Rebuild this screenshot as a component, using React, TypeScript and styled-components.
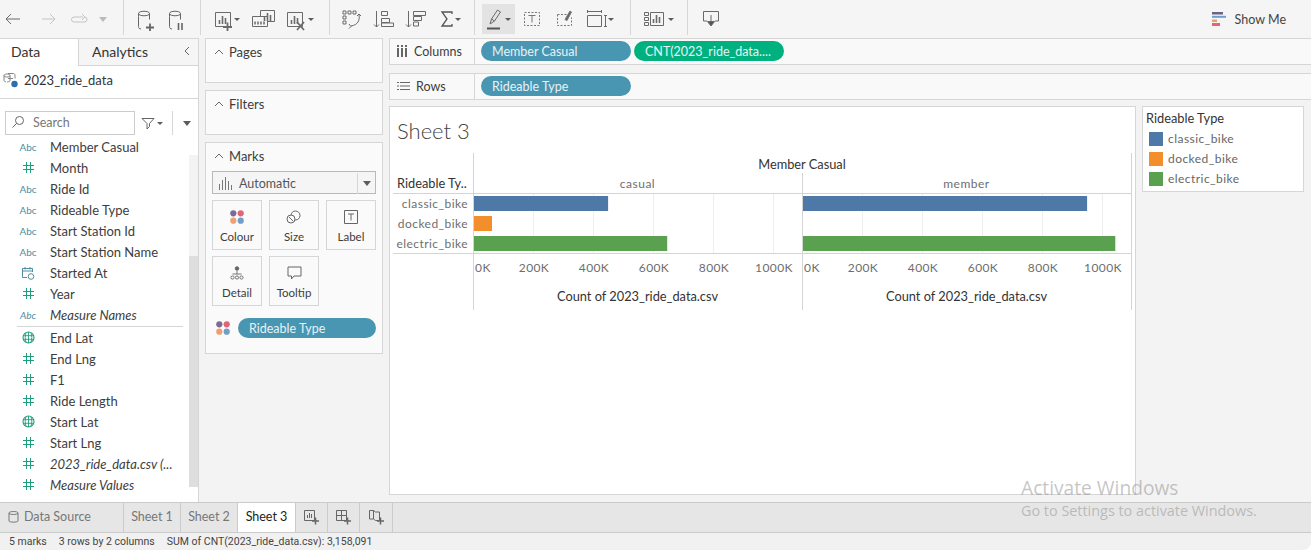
import React from 'react';
import styled, { createGlobalStyle } from 'styled-components';

const GlobalStyle = createGlobalStyle`
  html, body { margin: 0; padding: 0; background: #fff; }
  body { font-family: Lato, "Open Sans", sans-serif; color: #333; overflow: hidden; }
  * { box-sizing: border-box; }
`;

const Frame = styled.div`
  position: relative;
  width: 1311px;
  height: 550px;
  background: #f3f3f3;
  border-bottom-right-radius: 8px;
  display: flex;
  flex-direction: column;
  overflow: hidden;
`;

/* toolbar */
const Toolbar = styled.div`
  height: 38px;
  flex: none;
  display: flex;
  align-items: stretch;
  background: #f5f5f5;
`;
const ToolGroup = styled.div<{ $w: number; $pad?: number }>`
  width: ${p => p.$w}px;
  flex: none;
  display: flex;
  align-items: center;
  padding-left: ${p => p.$pad ?? 0}px;
  border-right: 1px solid #d6d6d6;
  margin-bottom: 3px;
`;
const Slot = styled.div<{ $w: number; $on?: boolean; $pad?: number; $gap?: number }>`
  width: ${p => p.$w}px;
  height: 30px;
  margin-top: 3px;
  flex: none;
  display: flex;
  align-items: center;
  justify-content: ${p => (p.$pad !== undefined ? 'flex-start' : 'center')};
  padding-left: ${p => p.$pad ?? 0}px;
  gap: ${p => p.$gap ?? 0}px;
  background: ${p => (p.$on ? '#e3e3e3' : 'transparent')};
  svg { flex: none; }
`;
const ShowMe = styled.div`
  margin-left: auto;
  margin-right: 25px;
  display: flex;
  align-items: center;
  gap: 9px;
  font-size: 12.5px;
  color: #444;
`;
const Caret = styled.span<{ $light?: boolean; $big?: boolean }>`
  display: inline-block;
  flex: none;
  width: 0;
  height: 0;
  border-left: ${p => (p.$big ? 4 : 3)}px solid transparent;
  border-right: ${p => (p.$big ? 4 : 3)}px solid transparent;
  border-top: ${p => (p.$big ? 5 : 3)}px solid ${p => (p.$light ? '#bbb' : '#5c5c5c')};
`;

const Ic = ({ w = 24, h = 24, c = '#6a6a6a', children }: { w?: number; h?: number; c?: string; children: React.ReactNode }) => (
  <svg width={w} height={h} viewBox={`0 0 ${w} ${h}`} fill="none" stroke={c} strokeWidth="1">
    {children}
  </svg>
);

const Cyl = () => <path d="M4.500 9.500v10c0 1.500 1 2.500 2.500 2.500M4.500 6.500c0-3 11-3 11 0v6M4.500 6.500c0 3 11 3 11 0M4.500 6.500v3" />;
const Bars = ({ x, y }: { x: number; y: number }) => (
  <path d={`M${x + 0.5} ${y + 4}v4M${x + 3.5} ${y}v8M${x + 6.5} ${y + 2}v6`} strokeWidth="1.6" />
);

/* main area */
const Main = styled.div`
  flex: 1;
  min-height: 0;
  display: flex;
`;
const DataPane = styled.div`
  width: 199px;
  flex: none;
  background: #fff;
  border-top: 1px solid #d6d6d6;
  border-right: 1px solid #d6d6d6;
  display: flex;
  flex-direction: column;
`;
const Tabs = styled.div`
  height: 27px;
  flex: none;
  display: flex;
`;
const Tab = styled.div<{ $on?: boolean }>`
  width: ${p => (p.$on ? 78 : 120)}px;
  display: flex;
  align-items: center;
  justify-content: space-between;
  padding: 0 7px 2px ${p => (p.$on ? 11 : 13)}px;
  font-size: 14px;
  color: #333;
  background: ${p => (p.$on ? '#fff' : '#f5f5f5')};
  border-left: ${p => (p.$on ? 'none' : '1px solid #d6d6d6')};
  border-bottom: ${p => (p.$on ? 'none' : '1px solid #d6d6d6')};
`;
const SourceRow = styled.div`
  height: 33px;
  flex: none;
  display: flex;
  align-items: center;
  gap: 5px;
  padding: 0 0 4px 3px;
  font-size: 13px;
  border-bottom: 1px solid #d6d6d6;
`;
const SearchRow = styled.div`
  height: 37px;
  flex: none;
  padding: 12px 0 0 5px;
  display: flex;
  align-items: flex-start;
`;
const SearchBox = styled.div`
  width: 130px;
  height: 24px;
  border: 1px solid #ccc;
  display: flex;
  align-items: center;
  gap: 8px;
  padding: 0 0 2px 5px;
  font-size: 12.5px;
  color: #777;
`;
const FilterBtn = styled.div`
  width: 32px;
  height: 24px;
  margin-left: 6px;
  display: flex;
  align-items: center;
  gap: 2px;
  border-right: 1px solid #d6d6d6;
`;
const MenuBtn = styled.div`
  height: 24px;
  display: flex;
  align-items: center;
  margin-left: 10px;
`;
const ListArea = styled.div`
  flex: 1;
  min-height: 0;
  display: flex;
`;
const FieldList = styled.div`
  width: 189px;
  flex: none;
`;
const Field = styled.div<{ $italic?: boolean }>`
  height: 21px;
  display: flex;
  align-items: center;
  font-size: 13px;
  font-style: ${p => (p.$italic ? 'italic' : 'normal')};
  color: #3d3d3d;
  white-space: nowrap;
`;
const FieldIcon = styled.span`
  width: 50px;
  padding-left: 17px;
  flex: none;
  display: flex;
  justify-content: center;
  padding-right: 11px;
`;
const AbcTag = styled.span`
  font-size: 10px;
  color: #4f8da3;
`;
const FieldRule = styled.div`
  height: 1px;
  margin: 1px 6px 0 17px;
  background: #d6d6d6;
`;
const Track = styled.div`
  width: 9px;
  margin: 19px 0 15px;
  background: #f3f3f3;
  display: flex;
  flex-direction: column;
  justify-content: flex-end;
`;
const Thumb = styled.div`
  height: 231px;
  background: #dedede;
`;

const Side = styled.div`
  width: 190px;
  flex: none;
  padding: 0 6px;
  display: flex;
  flex-direction: column;
  gap: 7px;
`;
const Card = styled.div<{ $h: number }>`
  height: ${p => p.$h}px;
  flex: none;
  background: #fafafa;
  border: 1px solid #d6d6d6;
`;
const CardHead = styled.div`
  height: 26px;
  display: flex;
  align-items: center;
  gap: 3px;
  padding-left: 6px;
  font-size: 13px;
  color: #3d3d3d;
`;
const MarkSelect = styled.div`
  margin: 2px 6px 0;
  height: 23px;
  border: 1px solid #b9b9b9;
  background: #f5f5f5;
  display: flex;
  align-items: center;
  gap: 7px;
  padding: 1px 0 0 5px;
  font-size: 12.5px;
  color: #555;
`;
const SelectArrow = styled.span`
  margin-left: auto;
  width: 18px;
  height: 21px;
  border-left: 1px solid #d6d6d6;
  display: flex;
  align-items: center;
  justify-content: center;
`;
const MarkGrid = styled.div`
  margin: 6px 6px 0;
  display: grid;
  grid-template-columns: repeat(3, 50px);
  grid-auto-rows: 50px;
  gap: 6px 7px;
`;
const MarkBtn = styled.div`
  border: 1px solid #d6d6d6;
  display: flex;
  flex-direction: column;
  align-items: center;
  padding-top: 9px;
  font-size: 11.5px;
  color: #3d3d3d;
  svg { margin-bottom: 6px; }
`;
const MarkPillRow = styled.div`
  margin: 12px 6px 0 10px;
  display: flex;
  align-items: center;
  gap: 8px;
`;
const Pill = styled.div<{ $green?: boolean; $w: number }>`
  width: ${p => p.$w}px;
  height: 20px;
  flex: none;
  border-radius: 10px;
  background: ${p => (p.$green ? '#00b180' : '#4996b2')};
  color: #e6f2f6;
  font-size: 12.5px;
  line-height: 22px;
  padding-left: 11px;
  white-space: nowrap;
`;

const Work = styled.div`
  flex: 1;
  min-width: 0;
  display: flex;
  flex-direction: column;
`;
const Shelf = styled.div`
  height: 27px;
  flex: none;
  display: flex;
  background: #f9f9f9;
  border: 1px solid #d6d6d6;
  border-right: none;
  margin-bottom: 8px;
`;
const ShelfLabel = styled.div`
  width: 85px;
  flex: none;
  border-right: 1px solid #d6d6d6;
  display: flex;
  align-items: center;
  gap: 6px;
  padding: 0 0 1px 7px;
  font-size: 12.5px;
  color: #3d3d3d;
`;
const ShelfPills = styled.div`
  display: flex;
  align-items: center;
  gap: 3px;
  padding: 0 0 1px 6px;
`;
const Canvas = styled.div`
  flex: 1;
  min-height: 0;
  display: flex;
  gap: 6px;
  margin-top: -2px;
  padding-bottom: 7px;
`;
const Sheet = styled.div`
  width: 747px;
  flex: none;
  background: #fff;
  border: 1px solid #d6d6d6;
`;
const SheetTitle = styled.div`
  height: 43px;
  padding: 10px 0 0 7px;
  font-size: 22px;
  font-weight: 300;
  line-height: 27px;
  color: #444;
`;
const Legend = styled.div`
  width: 162px;
  height: 86px;
  flex: none;
  background: #fff;
  border: 1px solid #d6d6d6;
  padding: 2px 0 0 3px;
`;
const LegendTitle = styled.div`
  font-size: 12.8px;
  line-height: 18px;
  color: #333;
  margin-bottom: 5px;
`;
const LegendRow = styled.div`
  height: 20px;
  display: flex;
  align-items: flex-start;
  gap: 5px;
  padding-left: 3px;
  font-size: 12px;
  line-height: 13px;
  letter-spacing: 0.45px;
  color: #666;
`;
const Swatch = styled.span<{ $c: string }>`
  width: 14px;
  height: 14px;
  background: ${p => p.$c};
`;

/* sheet tabs + status */
const SheetTabs = styled.div`
  height: 31px;
  flex: none;
  display: flex;
  background: #e6e6e6;
  border-top: 1px solid #cbcbcb;
  border-bottom: 1px solid #cbcbcb;
`;
const SheetTab = styled.div<{ $w: number; $on?: boolean }>`
  width: ${p => p.$w}px;
  flex: none;
  display: flex;
  align-items: center;
  justify-content: center;
  gap: 5px;
  padding-bottom: 2px;
  font-size: 12.5px;
  color: ${p => (p.$on ? '#222' : '#777')};
  background: ${p => (p.$on ? '#fff' : 'transparent')};
  border-right: 1px solid #cbcbcb;
`;
const SourceTab = styled(SheetTab)`
  justify-content: flex-start;
  padding-left: 8px;
`;
const Status = styled.div`
  height: 17px;
  flex: none;
  display: flex;
  align-items: center;
  gap: 12px;
  padding-left: 9px;
  font-family: Roboto, "Liberation Sans", sans-serif;
  font-size: 10.5px;
  color: #444;
  background: #f1f1f1;
  border-bottom-right-radius: 8px;
`;
const Watermark = styled.div`
  position: absolute;
  left: 1021px;
  top: 475px;
  font-family: "Open Sans", sans-serif;
  color: rgba(140, 140, 140, 0.5);
  pointer-events: none;
`;
const WatermarkBig = styled.div`
  font-size: 19.2px;
  line-height: 26px;
`;
const WatermarkSmall = styled.div`
  font-size: 14.4px;
  line-height: 20px;
`;

const ChartSvg = styled.svg`
  display: block;
  text {
    font-family: Lato, sans-serif;
    font-size: 12px;
  }
  .dark {
    font-size: 12.8px;
    fill: #333;
  }
`;

const BLUE = '#4e79a7';
const ORANGE = '#f28e2b';
const GREEN = '#59a14f';

const Hash = () => (
  <svg width="13" height="13" viewBox="0 0 13 13" fill="none" stroke="#1f9e7e" strokeWidth="1">
    <path d="M4.500 1v11M8.500 1v11M1 4.500h11M1 8.500h11" />
  </svg>
);
const Globe = () => (
  <svg width="13" height="13" viewBox="0 0 13 13" fill="none" stroke="#1f9e7e" strokeWidth="1.100">
    <circle cx="6.500" cy="6.500" r="5.500" />
    <path d="M1 4.700h11M1 8.300h11M6.500 1v11M4 1.800c-1 3-1 6.400 0 9.400M9 1.800c1 3 1 6.400 0 9.400" strokeWidth=".9" />
  </svg>
);
const Calendar = () => (
  <svg width="14" height="14" viewBox="0 0 14 14" fill="none" stroke="#4f8da3" strokeWidth="1">
    <path d="M6 11.500H1.500v-9h10V6M1.500 5h10M4 1v2.500M9 1v2.500" />
    <circle cx="10" cy="10.500" r="2.800" />
  </svg>
);
const Dots = () => (
  <svg width="14" height="14" viewBox="0 0 14 14">
    <circle cx="3.300" cy="3.300" r="3.100" fill="#7b6a94" />
    <circle cx="10.700" cy="3.300" r="3.100" fill="#e0657a" />
    <circle cx="3.300" cy="10.700" r="3.100" fill="#eba26f" />
    <circle cx="10.700" cy="10.700" r="3.100" fill="#6f9fc8" />
  </svg>
);
const Chevron = () => (
  <svg width="14" height="10" viewBox="0 0 14 10" fill="none" stroke="#666" strokeWidth="1">
    <path d="M3 7l4-4 4 4" />
  </svg>
);

type Kind = 'abc' | 'hash' | 'globe' | 'cal';
const dims: [string, Kind, boolean?][] = [
  ['Member Casual', 'abc'],
  ['Month', 'hash'],
  ['Ride Id', 'abc'],
  ['Rideable Type', 'abc'],
  ['Start Station Id', 'abc'],
  ['Start Station Name', 'abc'],
  ['Started At', 'cal'],
  ['Year', 'hash'],
  ['Measure Names', 'abc', true],
];
const measures: [string, Kind, boolean?][] = [
  ['End Lat', 'globe'],
  ['End Lng', 'hash'],
  ['F1', 'hash'],
  ['Ride Length', 'hash'],
  ['Start Lat', 'globe'],
  ['Start Lng', 'hash'],
  ['2023_ride_data.csv (...', 'hash', true],
  ['Measure Values', 'hash', true],
];

const FieldRow = ({ f }: { f: [string, Kind, boolean?] }) => (
  <Field $italic={f[2]}>
    <FieldIcon>
      {f[1] === 'abc' && <AbcTag>Abc</AbcTag>}
      {f[1] === 'hash' && <Hash />}
      {f[1] === 'globe' && <Globe />}
      {f[1] === 'cal' && <Calendar />}
    </FieldIcon>
    {f[0]}
  </Field>
);

const PANEL_W = 329;
const X_PER_K = 0.3;
const panels = [
  { name: 'casual', x: 84, values: [447, 60, 644] },
  { name: 'member', x: 413, values: [947, 0, 1041] },
];
const rows = [
  { name: 'classic_bike', c: BLUE },
  { name: 'docked_bike', c: ORANGE },
  { name: 'electric_bike', c: GREEN },
];
const ticks = [0, 200, 400, 600, 800, 1000];
const LINE = '#d4d4d4';
const GREY = '#6e6e6e';

const Chart = () => (
  <ChartSvg width={745} height={170} viewBox="0 0 745 170">
    {panels.map(p => (
      <g key={p.name}>
        {ticks.slice(1).map(t => (
          <line key={t} x1={p.x + t * X_PER_K - 0.5} x2={p.x + t * X_PER_K - 0.5} y1={44} y2={103} stroke="#eeeeee" />
        ))}
        {rows.map((r, i) =>
          p.values[i] ? (
            <rect key={r.name} x={p.x} y={46 + i * 20} width={p.values[i] * X_PER_K} height={15} fill={r.c} />
          ) : null
        )}
        {ticks.map(t => (
          <text
            key={t}
            x={t === 0 ? p.x + 1 : p.x + t * X_PER_K}
            y={122}
            textAnchor={t === 0 ? 'start' : 'middle'}
            fill={GREY}
            letterSpacing=".4"
          >
            {t}K
          </text>
        ))}
        <text x={p.x + PANEL_W / 2 - 1} y={38} textAnchor="middle" fill={GREY} letterSpacing=".5">{p.name}</text>
        <text x={p.x + PANEL_W / 2 - 1} y={151} textAnchor="middle" className="dark">Count of 2023_ride_data.csv</text>
      </g>
    ))}
    <path d="M83.500 3V160M412.500 23V160M741.500 3V160" stroke={LINE} />
    <path d="M3 43.500H741.500M3 103.500H741.500" stroke={LINE} />
    <text x={412} y={19} textAnchor="middle" className="dark">Member Casual</text>
    <text x={7} y={38} className="dark">Rideable Ty..</text>
    {rows.map((r, i) => (
      <text key={r.name} x={78} y={58 + i * 20} textAnchor="end" fill={GREY} letterSpacing=".45">{r.name}</text>
    ))}
  </ChartSvg>
);

const App = () => (
  <Frame>
    <GlobalStyle />
    <Toolbar>
      <ToolGroup $w={124}>
        <Slot $w={29}><Ic><path d="M3 12h14M8 7l-5 5 5 5" /></Ic></Slot>
        <Slot $w={37}><Ic c="#c4c4c4"><path d="M6 12h13M14 7l5 5-5 5" /></Ic></Slot>
        <Slot $w={26}><Ic c="#c4c4c4"><path d="M16 10H7a2.500 2.500 0 000 5h10a2.500 2.500 0 001-5M15 7l3 3-3 3" /></Ic></Slot>
        <Slot $w={22}><Caret $light $big /></Slot>
      </ToolGroup>
      <ToolGroup $w={77}>
        <Slot $w={44}><Ic c="#666"><Cyl /><path d="M12 20.500h8M16 16.500v8" strokeWidth="1.800" /></Ic></Slot>
        <Slot $w={18}><Ic c="#666"><Cyl /><path d="M13.500 16v7M17 16v7" strokeWidth="1.600" /></Ic></Slot>
      </ToolGroup>
      <ToolGroup $w={129}>
        <Slot $w={42} $pad={10.5}>
          <Ic w={22}><path d="M3.500 5.500h15v14h-15z" /><Bars x={7} y={9} /><path d="M11 20h9M15.500 15.500v9" strokeWidth="1.800" /></Ic>
          <Caret />
        </Slot>
        <Slot $w={40}>
          <Ic><path d="M9.500 9V3.500h14v11H17M1.500 9.500h15v10h-15z" /><Bars x={13} y={6} /><path d="M4 14.500v3M7 14.500v3M10 14.500v3M13 14.500v3" strokeWidth="1.500" /></Ic>
        </Slot>
        <Slot $w={46} $pad={0.5}>
          <Ic><path d="M3.500 5.500h15v14h-15z" /><Bars x={7} y={9} /><path d="M13 15l7 8M20 15l-7 8" strokeWidth="1.800" /></Ic>
          <Caret />
        </Slot>
      </ToolGroup>
      <ToolGroup $w={145}>
        <Slot $w={42}><Ic><path d="M4 4h3v3H4zM9 4h3v3H9zM14 4h3v3h-3zM4 9h3v3H4zM4 14h3v3H4z" /><path d="M20 8c1 5-1 10-8 11M10 17l2 2.500-2 2M18 9l2-2 2 2" /></Ic></Slot>
        <Slot $w={22}><Ic><path d="M5.500 4v16M3 17.500l2.500 2.500 2.500-2.500M10.500 4.500h6v4h-6zM10.500 11.500h8v4h-8zM10.500 16h12v3.500h-12z" /></Ic></Slot>
        <Slot $w={42}><Ic><path d="M5.500 4v16M3 17.500l2.500 2.500 2.500-2.500M10.500 4.500h12v4h-12zM10.500 9.500h8v4h-8zM10.500 15h5v4h-5z" /></Ic></Slot>
        <Slot $w={28} $gap={1}>
          <Ic w={14} h={20} c="#555"><path d="M12 5V3H2l5 7-5 7h10v-2" strokeWidth="1.300" /></Ic>
          <Caret />
        </Slot>
      </ToolGroup>
      <ToolGroup $w={156} $pad={7}>
        <Slot $w={33} $on $gap={1}>
          <Ic w={18} h={24}>
            <path d="M4 17l1.500-5 6-9 3 2-6 9-4.500 3zM5.500 12l3 2" />
            <path d="M1 21.500h13" stroke="#555" strokeWidth="2" />
          </Ic>
          <Caret />
        </Slot>
        <Slot $w={33}>
          <Ic w={20} h={20} c="#777"><path d="M2.500 3.500h15v13h-15z" strokeDasharray="2 1.500" /><path d="M6.500 6.500h7M10 6.500v7" /></Ic>
        </Slot>
        <Slot $w={33}>
          <Ic w={20} h={20} c="#777"><path d="M2.500 5.500h12M2.500 5.500v11h14v-8" strokeDasharray="2 1.500" /><path d="M15 2l-5 8.500 2 1 4.500-8.500z" fill="#666" /></Ic>
        </Slot>
        <Slot $w={36} $gap={0}>
          <Ic w={24} h={20}><path d="M3.500 2.500h14M3.500 1v3M17.500 1v3M3.500 6.500h14v11h-14zM20 6.500h3M20 17.500h3M21.500 6.500v11" /></Ic>
          <Caret />
        </Slot>
      </ToolGroup>
      <ToolGroup $w={57}>
        <Slot $w={54} $pad={12} $gap={3}>
          <Ic w={22} h={20}><path d="M1.500 3.500h4v3h-4zM1.500 8.500h4v3h-4zM1.500 13.500h4v3h-4zM7.500 3.500h13v13h-13z" /><Bars x={10} y={6} /></Ic>
          <Caret />
        </Slot>
      </ToolGroup>
      <Slot $w={46}>
        <Ic w={18} h={22}><path d="M5 14H1.500V4.500h15V14H13M9 8v9" /><path d="M5.500 14.500h7L9 19z" fill="#555" /></Ic>
      </Slot>
      <ShowMe>
        <svg width="14" height="14" viewBox="0 0 14 14">
          <rect x="0" y="0" width="11" height="2.500" fill="#6b6488" />
          <rect x="0" y="3.800" width="14" height="2" fill="#6f9fc8" />
          <rect x="0" y="7.500" width="5" height="2.500" fill="#eba26f" />
          <rect x="0" y="11" width="8" height="3" fill="#e0657a" />
        </svg>
        Show Me
      </ShowMe>
    </Toolbar>

    <Main>
      <DataPane>
        <Tabs>
          <Tab $on>Data</Tab>
          <Tab>
            Analytics
            <svg width="8" height="12" viewBox="0 0 8 12" fill="none" stroke="#666"><path d="M6 2L2 6l4 4" /></svg>
          </Tab>
        </Tabs>
        <SourceRow>
          <svg width="16" height="16" viewBox="0 0 16 16" fill="none" stroke="#777" strokeWidth=".9">
            <path d="M1 3.500c0-2 6-2 6 0v5c0 1-2 1.500-3 1.500M1 3.500v5c0 .8 1 1.200 2 1.400M1 3.500c0 2 6 2 6 0" />
            <path d="M5 1.500h5c1 0 2 .5 2 2v3M5 6.500h5" />
            <circle cx="11.500" cy="12" r="3.200" fill="#2e6fb0" stroke="none" />
          </svg>
          2023_ride_data
        </SourceRow>
        <SearchRow>
          <SearchBox>
            <svg width="14" height="14" viewBox="0 0 14 14" fill="none" stroke="#666"><circle cx="8.500" cy="5.500" r="4" /><path d="M5.500 8.500L1.500 12.500" /></svg>
            Search
          </SearchBox>
          <FilterBtn>
            <svg width="14" height="13" viewBox="0 0 14 13" fill="none" stroke="#666"><path d="M1 1.500h12L8.500 6.500v3L6 12V6.500z" /></svg>
            <Caret />
          </FilterBtn>
          <MenuBtn><Caret $big /></MenuBtn>
        </SearchRow>
        <ListArea>
          <FieldList>
            {dims.map(f => <FieldRow key={f[0]} f={f} />)}
            <FieldRule />
            {measures.map(f => <FieldRow key={f[0]} f={f} />)}
          </FieldList>
          <Track><Thumb /></Track>
        </ListArea>
      </DataPane>

      <Side>
        <Card $h={45}><CardHead><Chevron />Pages</CardHead></Card>
        <Card $h={45}><CardHead><Chevron />Filters</CardHead></Card>
        <Card $h={212}>
          <CardHead><Chevron />Marks</CardHead>
          <MarkSelect>
            <svg width="14" height="14" viewBox="0 0 14 14" fill="none" stroke="#777"><path d="M1.500 8v6M4.500 4v10M7.500 1v13M10.500 5v9M13.500 9v5" /></svg>
            Automatic
            <SelectArrow><Caret $big /></SelectArrow>
          </MarkSelect>
          <MarkGrid>
            <MarkBtn><Dots />Colour</MarkBtn>
            <MarkBtn>
              <svg width="16" height="14" viewBox="0 0 16 14" fill="none" stroke="#666"><circle cx="9.500" cy="5.500" r="4.500" /><circle cx="5" cy="9" r="4" fill="#fafafa" /><path d="M3 7l4 4" /></svg>
              Size
            </MarkBtn>
            <MarkBtn>
              <svg width="14" height="14" viewBox="0 0 14 14" fill="none" stroke="#666"><path d="M.5.500h13v13H.5zM4 4h6M7 4v6.500" /></svg>
              Label
            </MarkBtn>
            <MarkBtn>
              <svg width="14" height="14" viewBox="0 0 14 14" fill="none" stroke="#666" strokeWidth=".9"><circle cx="7" cy="2.500" r="1.800" fill="#666" /><path d="M7 5v3M2.500 8h9" /><circle cx="2.500" cy="11.500" r="1.600" /><circle cx="7" cy="11.500" r="1.600" /><circle cx="11.500" cy="11.500" r="1.600" /></svg>
              Detail
            </MarkBtn>
            <MarkBtn>
              <svg width="15" height="14" viewBox="0 0 15 14" fill="none" stroke="#666"><path d="M1 1h13v9H7l-2.500 3v-3H1z" /></svg>
              Tooltip
            </MarkBtn>
          </MarkGrid>
          <MarkPillRow>
            <Dots />
            <Pill $w={138}>Rideable Type</Pill>
          </MarkPillRow>
        </Card>
      </Side>

      <Work>
        <Shelf>
          <ShelfLabel>
            <svg width="11" height="12" viewBox="0 0 11 12" fill="#666"><rect x="0" y="3" width="2" height="9" /><rect x="4" y="3" width="2" height="9" /><rect x="8" y="3" width="2" height="9" /><rect x="0" y="0" width="2" height="2" /><rect x="4" y="0" width="2" height="2" /><rect x="8" y="0" width="2" height="2" /></svg>
            Columns
          </ShelfLabel>
          <ShelfPills>
            <Pill $w={150}>Member Casual</Pill>
            <Pill $w={150} $green>CNT(2023_ride_data....</Pill>
          </ShelfPills>
        </Shelf>
        <Shelf>
          <ShelfLabel>
            <svg width="13" height="10" viewBox="0 0 13 10" fill="none" stroke="#666"><path d="M3 1.500h10M3 5h10M3 8.500h10M0 1.500h2M0 5h2M0 8.500h2" strokeWidth="1.200" /></svg>
            Rows
          </ShelfLabel>
          <ShelfPills><Pill $w={150}>Rideable Type</Pill></ShelfPills>
        </Shelf>
        <Canvas>
          <Sheet>
            <SheetTitle>Sheet 3</SheetTitle>
            <Chart />
          </Sheet>
          <Legend>
            <LegendTitle>Rideable Type</LegendTitle>
            {rows.map(r => (
              <LegendRow key={r.name}><Swatch $c={r.c} />{r.name}</LegendRow>
            ))}
          </Legend>
        </Canvas>
      </Work>
    </Main>

    <SheetTabs>
      <SourceTab $w={124}>
        <svg width="11" height="13" viewBox="0 0 11 13" fill="none" stroke="#777"><path d="M1 3c0-2 9-2 9 0v8c0 1.500-9 1.500-9 0zM1 3c0 2 9 2 9 0" /></svg>
        Data Source
      </SourceTab>
      <SheetTab $w={57}>Sheet 1</SheetTab>
      <SheetTab $w={57}>Sheet 2</SheetTab>
      <SheetTab $w={58} $on>Sheet 3</SheetTab>
      <SheetTab $w={32}>
        <svg width="17" height="17" viewBox="0 0 17 17" fill="none" stroke="#666"><path d="M1.500 2.500h10v10h-10z" /><path d="M4.500 7v3M6.500 5v5M8.500 6v4" /><path d="M9 13h7M12.500 9.500v7" strokeWidth="1.500" /></svg>
      </SheetTab>
      <SheetTab $w={32}>
        <svg width="17" height="17" viewBox="0 0 17 17" fill="none" stroke="#666"><path d="M1.500 2.500h10v10h-10zM1.500 7.500h10M6.500 2.500v10" /><path d="M9 13h7M12.500 9.500v7" strokeWidth="1.500" /></svg>
      </SheetTab>
      <SheetTab $w={33}>
        <svg width="17" height="17" viewBox="0 0 17 17" fill="none" stroke="#666"><path d="M1.500 2.500h4l2 1.500h4v8.500h-4l-2-1.500h-4zM5.500 2.500V11" /><path d="M9 13h7M12.500 9.500v7" strokeWidth="1.500" /></svg>
      </SheetTab>
    </SheetTabs>
    <Status>
      <span>5 marks</span>
      <span>3 rows by 2 columns</span>
      <span>SUM of CNT(2023_ride_data.csv): 3,158,091</span>
    </Status>
    <Watermark>
      <WatermarkBig>Activate Windows</WatermarkBig>
      <WatermarkSmall>Go to Settings to activate Windows.</WatermarkSmall>
    </Watermark>
  </Frame>
);

export default App;
